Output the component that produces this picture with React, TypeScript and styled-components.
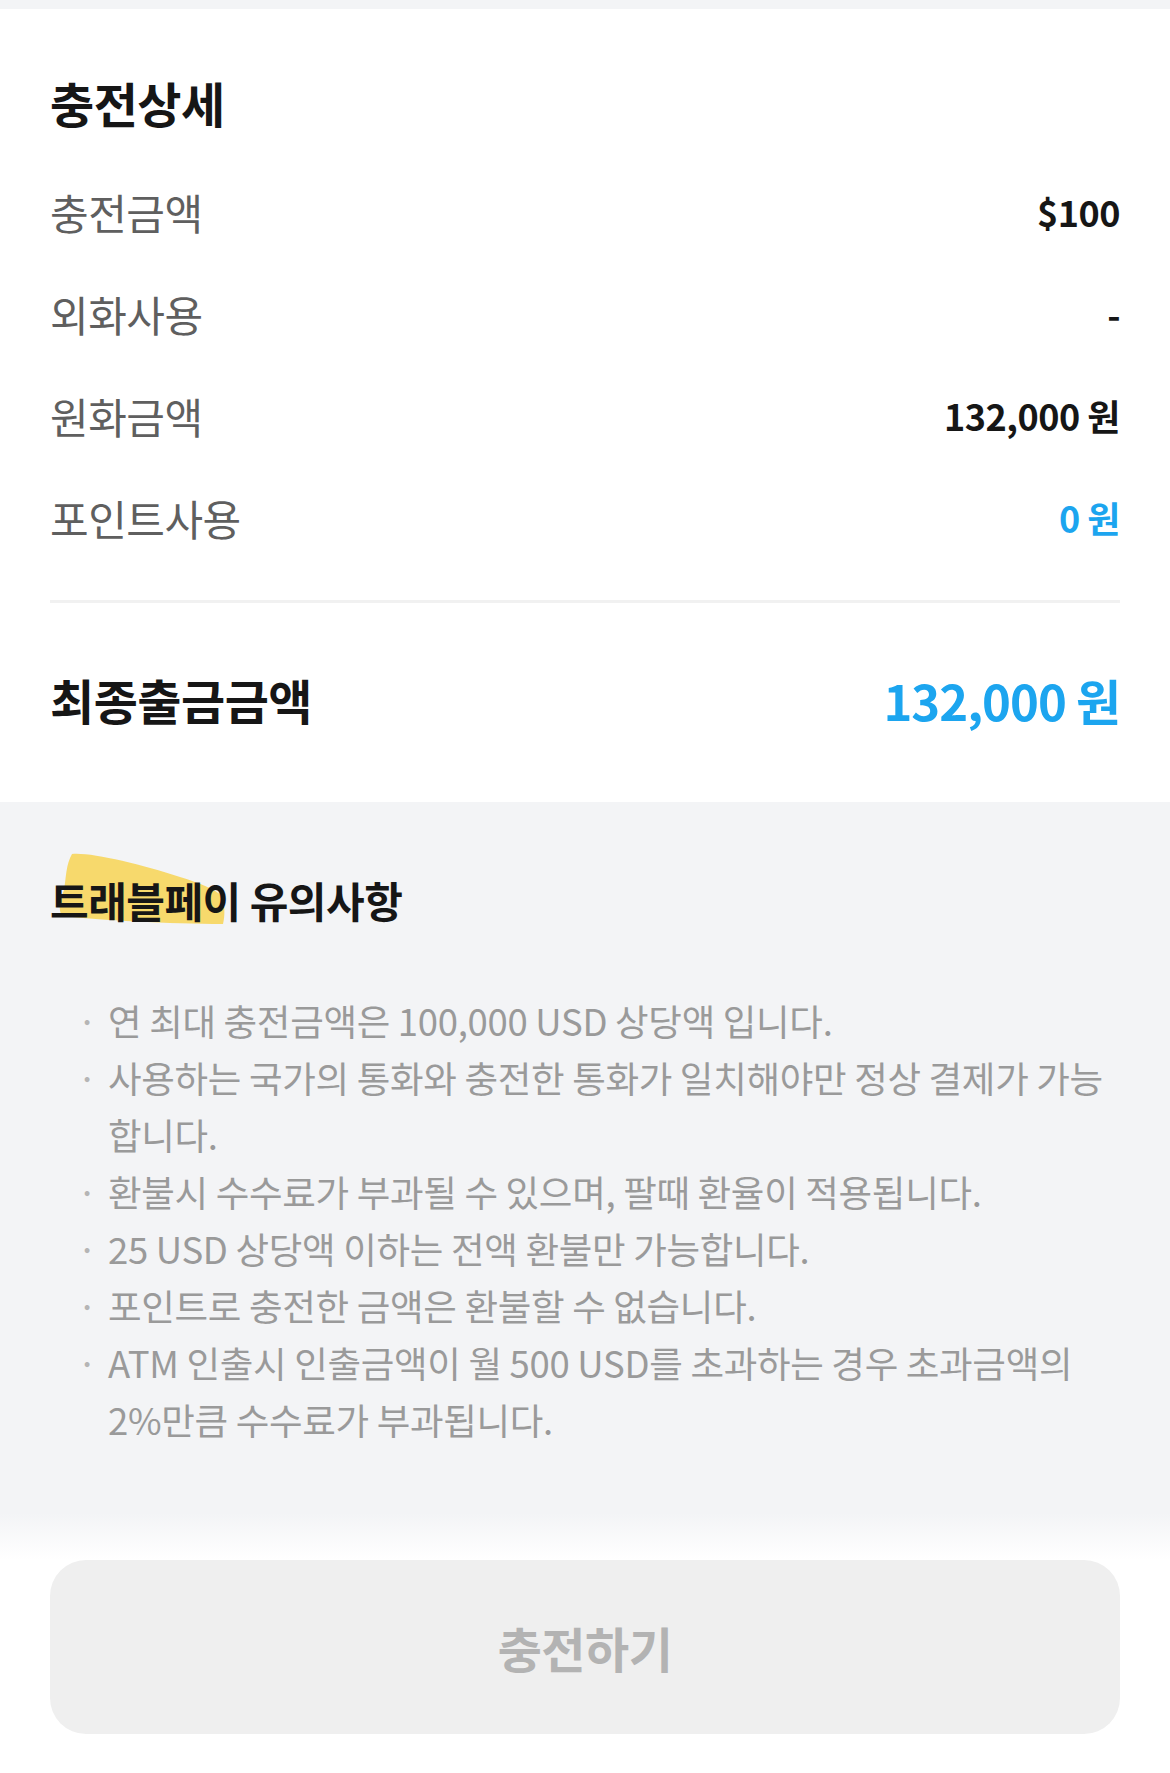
import React, {FC} from 'react';
import styled, {createGlobalStyle} from 'styled-components';

/*
 * Tokens.
 */

const colors = {
  ink: '#161616',
  label: '#5f5f5f',
  muted: '#9a9a9a',
  blue: '#1ca5ef',
  paleGrey: '#f3f4f6',
  line: '#f1f1f1',
  buttonBg: '#efefef',
  buttonText: '#b3b3b3',
  marker: '#f7d453',
};

const fontStack = `"Noto Sans CJK KR", "Noto Sans", "Liberation Sans", sans-serif`;

/*
 * Data.
 */

interface DetailRow {
  label: string;
  value: string;
  accent?: boolean;
}

const detailRows: DetailRow[] = [
  {label: '충전금액', value: '$100'},
  {label: '외화사용', value: '-'},
  {label: '원화금액', value: '132,000 원'},
  {label: '포인트사용', value: '0 원', accent: true},
];

const notices = [
  '연 최대 충전금액은 100,000 USD 상당액 입니다.',
  '사용하는 국가의 통화와 충전한 통화가 일치해야만 정상 결제가 가능합니다.',
  '환불시 수수료가 부과될 수 있으며, 팔때 환율이 적용됩니다.',
  '25 USD 상당액 이하는 전액 환불만 가능합니다.',
  '포인트로 충전한 금액은 환불할 수 없습니다.',
  'ATM 인출시 인출금액이 월 500 USD를 초과하는 경우 초과금액의 2%만큼 수수료가 부과됩니다.',
];

/*
 * Style.
 */

const GlobalStyle = createGlobalStyle`
  html, body {
    margin: 0;
    padding: 0;
    background: #ffffff;
  }
  body {
    font-family: ${fontStack};
    -webkit-font-smoothing: antialiased;
  }
  * {
    box-sizing: border-box;
  }
`;

const StyledPageDiv = styled.div`
  display: flex;
  flex-direction: column;
  width: 1170px;
  min-height: 1773px;
  background: #ffffff;
`;

const StyledTopStripDiv = styled.div`
  height: 9px;
  background: ${colors.paleGrey};
`;

const StyledDetailSection = styled.section`
  display: flex;
  flex-direction: column;
  padding: 62px 50px 52px;
  background: #ffffff;
`;

const StyledSectionTitle = styled.h2`
  margin: 0;
  font-size: 48px;
  line-height: 62px;
  font-weight: 700;
  color: ${colors.ink};
  letter-spacing: -0.5px;
`;

const StyledRowList = styled.div`
  display: flex;
  flex-direction: column;
  margin-top: 27px;
`;

const StyledRowDiv = styled.div`
  display: flex;
  align-items: center;
  justify-content: space-between;
  height: 102px;
`;

const StyledLabelSpan = styled.span`
  font-size: 42px;
  font-weight: 400;
  color: ${colors.label};
  letter-spacing: -0.5px;
`;

interface ValueProps {
  $accent?: boolean;
}

const StyledValueSpan = styled.span<ValueProps>`
  font-size: 36px;
  font-weight: 700;
  color: ${p => (p.$accent ? colors.blue : colors.ink)};
  letter-spacing: -0.5px;
`;

const StyledDividerHr = styled.hr`
  margin: 32px 0 0;
  border: 0;
  height: 3px;
  background: ${colors.line};
`;

const StyledTotalRowDiv = styled.div`
  display: flex;
  align-items: center;
  justify-content: space-between;
  height: 102px;
  margin-top: 45px;
`;

const StyledTotalLabelSpan = styled.span`
  font-size: 48px;
  font-weight: 700;
  color: ${colors.ink};
  letter-spacing: -0.5px;
`;

const StyledTotalValueSpan = styled.span`
  font-size: 49px;
  font-weight: 700;
  color: ${colors.blue};
  letter-spacing: -1px;
`;

const StyledNoticeSection = styled.section`
  flex: 1;
  display: flex;
  flex-direction: column;
  padding: 70px 50px 63px;
  background: ${colors.paleGrey};
`;

const StyledNoticeTitle = styled.h3`
  position: relative;
  margin: 0;
  font-size: 42px;
  line-height: 56px;
  font-weight: 700;
  color: ${colors.ink};
  letter-spacing: -0.5px;
`;

const StyledTitleTextSpan = styled.span`
  position: relative;
  z-index: 1;
`;

const StyledMarkerSvg = styled.svg`
  position: absolute;
  left: 0;
  top: -22px;
  width: 180px;
  height: 80px;
  z-index: 0;
`;

const StyledNoticeList = styled.ul`
  margin: 64px 0 0;
  padding: 0 12px 0 0;
  list-style: none;
`;

const StyledNoticeItem = styled.li`
  position: relative;
  padding-left: 58px;
  font-size: 36.5px;
  line-height: 57px;
  font-weight: 400;
  color: ${colors.muted};
  letter-spacing: -0.3px;

  &::before {
    content: '·';
    position: absolute;
    left: 27px;
    top: 0;
    color: #b5b5b5;
  }
`;

const StyledFooterDiv = styled.div`
  padding: 47px 50px 39px;
  background: linear-gradient(to bottom, ${colors.paleGrey} 0, #ffffff 47px, #ffffff 100%);
`;

const StyledChargeButton = styled.button`
  display: flex;
  align-items: center;
  justify-content: center;
  width: 100%;
  height: 174px;
  border: 0;
  border-radius: 36px;
  background: ${colors.buttonBg};
  font-family: ${fontStack};
  font-size: 48px;
  font-weight: 700;
  color: ${colors.buttonText};
  letter-spacing: -0.5px;
  cursor: default;
`;

/*
 * Component.
 */

const App: FC = () => (
  <>
    <GlobalStyle />
    <StyledPageDiv>
      <StyledTopStripDiv />
      <StyledDetailSection>
        <StyledSectionTitle>충전상세</StyledSectionTitle>
        <StyledRowList>
          {detailRows.map(row => (
            <StyledRowDiv key={row.label}>
              <StyledLabelSpan>{row.label}</StyledLabelSpan>
              <StyledValueSpan $accent={row.accent}>{row.value}</StyledValueSpan>
            </StyledRowDiv>
          ))}
        </StyledRowList>
        <StyledDividerHr />
        <StyledTotalRowDiv>
          <StyledTotalLabelSpan>최종출금금액</StyledTotalLabelSpan>
          <StyledTotalValueSpan>132,000 원</StyledTotalValueSpan>
        </StyledTotalRowDiv>
      </StyledDetailSection>
      <StyledNoticeSection>
        <StyledNoticeTitle>
          {renderMarker()}
          <StyledTitleTextSpan>트래블페이 유의사항</StyledTitleTextSpan>
        </StyledNoticeTitle>
        <StyledNoticeList>
          {notices.map(text => (
            <StyledNoticeItem key={text}>{text}</StyledNoticeItem>
          ))}
        </StyledNoticeList>
      </StyledNoticeSection>
      <StyledFooterDiv>
        <StyledChargeButton type="button">충전하기</StyledChargeButton>
      </StyledFooterDiv>
    </StyledPageDiv>
  </>
);

export default App;

/*
 * Helpers.
 */

function renderMarker() {
  // hand-drawn highlighter swoosh behind the first word
  return (
    <StyledMarkerSvg viewBox="0 0 180 80" aria-hidden>
      <path
        d="M22 4 C40 2 90 14 130 27 C150 33 166 40 172 46 C175 56 175 66 173 74 C120 74 50 70 12 66 C8 60 10 50 14 40 C16 28 16 14 22 4 Z"
        fill={colors.marker}
        opacity={0.85}
      />
    </StyledMarkerSvg>
  );
}
